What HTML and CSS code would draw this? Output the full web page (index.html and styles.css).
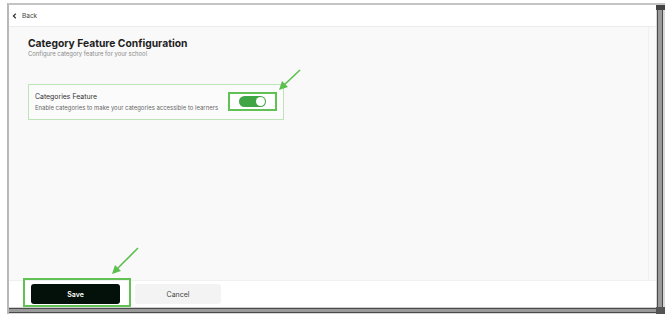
FILE: index.html
```html
<!DOCTYPE html>
<html>
<head>
<meta charset="utf-8">
<link rel="stylesheet" href="styles.css">
</head>
<body>
<div class="frame">
  <div class="viewport">
    <header class="topbar">
      <svg class="chev" width="5" height="6" viewBox="0 0 5 6"><path d="M3.8 0.8 L1.4 3 L3.8 5.2" fill="none" stroke="#333" stroke-width="1.2"/></svg>
      <span class="back">Back</span>
    </header>
    <main class="content">
      <h1 class="title">Category Feature Configuration</h1>
      <p class="subtitle">Configure category feature for your school</p>
      <div class="card">
        <div class="card-text">
          <div class="card-title">Categories Feature</div>
          <div class="card-desc">Enable categories to make your categories accessible to learners</div>
        </div>
        <div class="toggle-hl">
          <div class="toggle"><span class="knob"></span></div>
        </div>
      </div>
    </main>
    <footer class="footer">
      <div class="save-hl"><button class="btn save">Save</button></div>
      <button class="btn cancel">Cancel</button>
    </footer>
    <svg class="arrow arrow1" width="24" height="24" viewBox="0 0 24 24"><path d="M22 2 L4 19" stroke="#5cbf4f" stroke-width="1.6" fill="none"/><path d="M1 22 L4 13 L10 19 Z" fill="#5cbf4f"/></svg>
    <svg class="arrow arrow2" width="30" height="30" viewBox="0 0 30 30"><path d="M28 2 L5 25" stroke="#5cbf4f" stroke-width="1.6" fill="none"/><path d="M2 28 L5 19 L11 25 Z" fill="#5cbf4f"/></svg>
  </div>
  <div class="vscroll"></div>
  <div class="hscroll"></div>
  <div class="corner"></div>
</div>
</body>
</html>
```
FILE: styles.css
```css
* { box-sizing: border-box; }
html, body { margin: 0; padding: 0; background: #fff; }
body { font-family: Inter, "Noto Sans", sans-serif; color: #222; }
.frame {
  margin: 3px 0 0 7px;
  width: 658px;
  height: 311px;
  border-top: 2px solid #c4c4c4;
  border-left: 2px solid #b8b8b8;
  display: grid;
  grid-template-columns: 1fr 9px;
  grid-template-rows: 1fr 7px;
}
.viewport {
  position: relative;
  display: flex;
  flex-direction: column;
  background: #f9f9f9;
  overflow: hidden;
}
.topbar {
  height: 22px;
  background: #fff;
  border-bottom: 1px solid #ececec;
  display: flex;
  align-items: center;
  padding-left: 3px;
  gap: 5px;
}
.back { font-size: 6.5px; color: #444; }
.content {
  flex: 1;
  padding: 10px 0 0 19px;
  border-right: 1px solid #f0f0f0;
  margin-right: 7px;
}
.title {
  margin: 0;
  font-size: 10.3px;
  font-weight: 700;
  color: #1e1e1e;
  line-height: 13px;
}
.subtitle {
  margin: 0;
  font-size: 5.9px;
  color: #8a8a8a;
  line-height: 7px;
}
.card {
  margin-top: 27px;
  width: 256px;
  height: 36px;
  border: 1px solid #bfe3b9;
  background: #fbfbfb;
  display: flex;
  align-items: center;
  padding: 0 6px 0 6px;
  justify-content: space-between;
}
.card-title { font-size: 6.9px; color: #333; line-height: 10px; }
.card-desc { font-size: 5.95px; color: #666; line-height: 10px; margin-top: 1px; }
.toggle-hl {
  width: 49px;
  height: 19px;
  border: 2px solid #62c155;
  display: flex;
  align-items: center;
  justify-content: center;
  background: #fff;
  margin-top: -2px;
}
.toggle {
  width: 27px;
  height: 11px;
  border-radius: 6px;
  background: #3fa545;
  display: flex;
  justify-content: flex-end;
  align-items: center;
  padding-right: 1.5px;
}
.knob {
  width: 9px;
  height: 9px;
  border-radius: 50%;
  background: #fff;
}
.footer {
  height: 27px;
  background: #fff;
  border-top: 1px solid #f0f0f0;
  display: flex;
  align-items: flex-start;
  padding-left: 14px;
  gap: 4px;
}
.save-hl {
  border: 2px solid #62c155;
  padding: 4px 9px 1px 6px;
  margin-top: -3px;
}
.btn {
  font-family: Inter, sans-serif;
  font-size: 7px;
  border: none;
  border-radius: 3px;
  height: 20px;
  display: block;
}
.save { background: #03110a; color: #fff; font-weight: 600; width: 89px; }
.cancel { background: #f3f3f3; color: #444; width: 86px; margin-top: 3px; }
.arrow { position: absolute; }
.arrow1 { left: 269px; top: 63px; }
.arrow2 { left: 101px; top: 241px; }
.vscroll {
  background: linear-gradient(90deg, #d8d8d8 0 1px, #4a4a4a 1px 2px, #9a9a9a 2px 6px, #4a4a4a 6px 7px, #d8d8d8 7px);
  border-top: 5px solid #444;
}
.hscroll {
  background: linear-gradient(180deg, #cfcfcf 0 1px, #4a4a4a 1px 2px, #9a9a9a 2px 5px, #4a4a4a 5px 6px, #d8d8d8 6px);
}
.corner { background: #555; }
```
